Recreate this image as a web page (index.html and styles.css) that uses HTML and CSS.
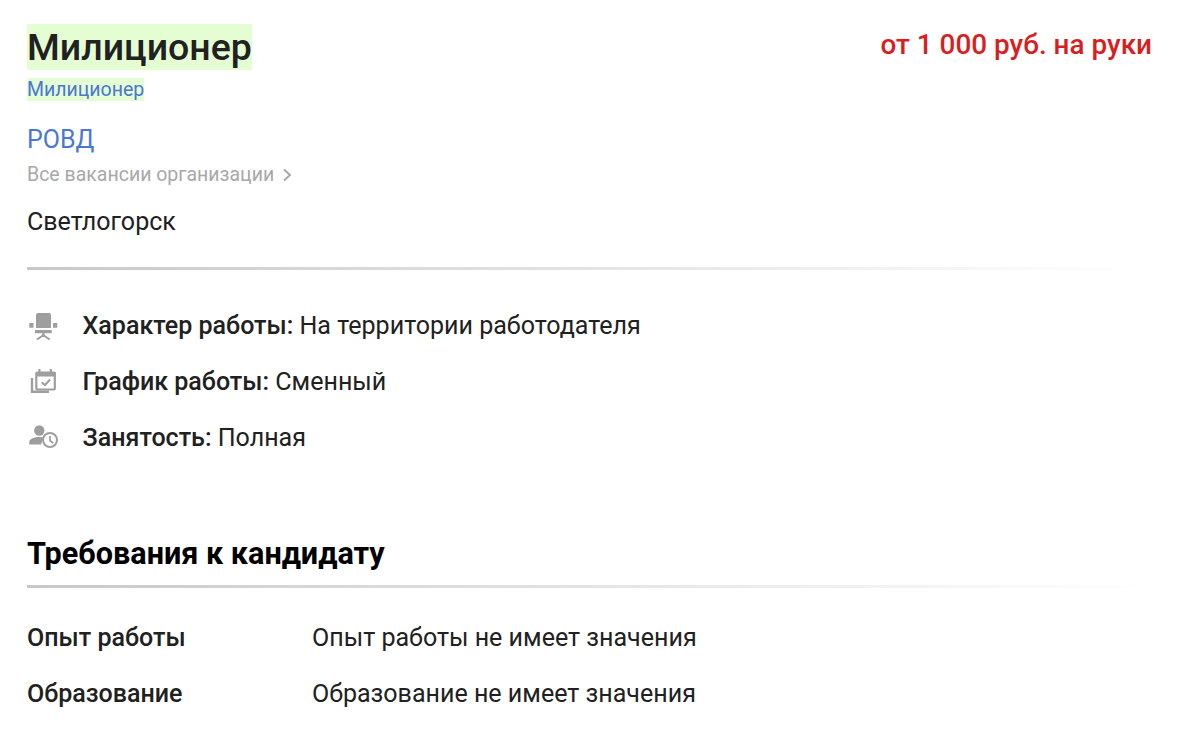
FILE: index.html
```html
<!DOCTYPE html>
<html lang="ru">
  <head>
    <meta charset="UTF-8" />
    <title>Милиционер</title>
    <link rel="stylesheet" href="styles.css">
  </head>
  <body>
    <main class="vacancy">
      <header class="vacancy-head">
        <div class="vacancy-titles">
          <h1 class="vacancy-title"><span class="match">Милиционер</span></h1>
          <a class="vacancy-category match" href="#">Милиционер</a>
        </div>
        <div class="vacancy-salary">от 1 000 руб. на руки</div>
      </header>

      <a class="company-name" href="#">РОВД</a>
      <a class="company-link" href="#">Все вакансии организации
        <svg class="chevron" width="12" height="16" viewBox="0 0 12 16" aria-hidden="true">
          <path d="M2 2.500 8 8l-6 5.500" fill="none" stroke="#a8a8a8" stroke-width="2"/>
        </svg>
      </a>
      <div class="vacancy-city">Светлогорск</div>

      <hr class="divider">

      <ul class="terms">
        <li class="term">
          <svg class="term-icon" width="32" height="30" viewBox="0 0 32 30" aria-hidden="true">
            <path fill="#9e9e9e" d="M9 4a2 2 0 0 1 2-2h11a2 2 0 0 1 2 2v13H9z"/>
            <path fill="#9e9e9e" d="M2.300 12h4.200v4.700H2.300zM26 12h4.300v4.700H26zM8 19h16.700v3.300H8z"/>
            <path fill="#9e9e9e" d="M15 22.300h2.700v1.700l5.600 3.800-1.200 1.500-4.800-3.200h-2l-4.800 3.200-1.200-1.500 5.700-3.800z"/>
          </svg>
          <span><b class="term-label">Характер работы:</b> На территории работодателя</span>
        </li>
        <li class="term">
          <svg class="term-icon" width="32" height="30" viewBox="0 0 32 30" aria-hidden="true">
            <path fill="none" stroke="#9e9e9e" stroke-width="2.400" d="M5 11v13.700h17"/>
            <path fill="none" stroke="#9e9e9e" stroke-width="2.200" d="M10.300 5.500h16.500a1 1 0 0 1 1 1v15a1 1 0 0 1-1 1H10.300a1 1 0 0 1-1-1v-15a1 1 0 0 1 1-1z"/>
            <path fill="#9e9e9e" d="M9 5h19.500v4.500H9zM11.300 2h2.200v4h-2.200zM22.700 2h2.200v4h-2.200z"/>
            <path fill="none" stroke="#9e9e9e" stroke-width="2" d="m14.700 15.200 3.300 2.800 5-5.500"/>
          </svg>
          <span><b class="term-label">График работы:</b> Сменный</span>
        </li>
        <li class="term">
          <svg class="term-icon" width="32" height="30" viewBox="0 0 32 30" aria-hidden="true">
            <circle cx="12.300" cy="7.500" r="5.200" fill="#9e9e9e"/>
            <path fill="#9e9e9e" d="M2.300 21.500v-2.500c0-3.300 5.500-5 10-5 2 0 4 .3 5.700 1a9 9 0 0 0-3.800 6.500z"/>
            <circle cx="23" cy="17" r="7" fill="#fff" stroke="#9e9e9e" stroke-width="2"/>
            <path fill="none" stroke="#9e9e9e" stroke-width="1.700" d="M23 13v4.700l3.300 2.300"/>
          </svg>
          <span><b class="term-label">Занятость:</b> Полная</span>
        </li>
      </ul>

      <section class="requirements">
        <h2 class="section-title">Требования к кандидату</h2>
        <hr class="divider divider-tight">
        <dl class="req-list">
          <div class="req-row">
            <dt class="req-label">Опыт работы</dt>
            <dd class="req-value">Опыт работы не имеет значения</dd>
          </div>
          <div class="req-row">
            <dt class="req-label">Образование</dt>
            <dd class="req-value">Образование не имеет значения</dd>
          </div>
        </dl>
      </section>
    </main>
  </body>
</html>
```
FILE: styles.css
```css
body {
  font-family: "Roboto", sans-serif;
  margin: 0;
  padding: 0;
  background-color: #fff;
  color: #212121;
  font-size: 25.06px;
}

a {
  text-decoration: none;
}

.vacancy {
  padding: 24px 48px 0 27px;
}

/* Head */
.vacancy-head {
  display: flex;
  justify-content: space-between;
  align-items: flex-start;
}

.vacancy-title {
  margin: 0;
  font-size: 37.5px;
  font-weight: 500;
  line-height: 46px;
}

.match {
  background-color: #e4fdd2;
}

.vacancy-title .match {
  display: inline-block;
}

.vacancy-category {
  display: inline-block;
  margin-top: 8px;
  font-size: 19.5px;
  line-height: 23px;
  color: #4a76d4;
}

.vacancy-salary {
  font-size: 27.9px;
  font-weight: 500;
  line-height: 32px;
  margin-top: 5px;
  color: #d81f1f;
}

/* Company */
.company-name {
  display: block;
  margin-top: 22px;
  font-size: 25px;
  line-height: 32px;
  color: #4a76d4;
}

.company-link {
  display: flex;
  align-items: center;
  gap: 8px;
  margin-top: 7px;
  font-size: 19.5px;
  line-height: 24px;
  color: #a8a8a8;
}

.vacancy-city {
  margin-top: 19px;
  line-height: 32px;
}

.divider {
  height: 3px;
  margin: 29px 0 0;
  border: 0;
  width: 1120px;
  background: linear-gradient(to right, #c8c8c8, #fff);
}

/* Terms */
.terms {
  list-style: none;
  margin: 28px 0 0;
  padding: 0;
}

.term {
  display: flex;
  align-items: center;
  gap: 24px;
  height: 56px;
  line-height: 32px;
}

.term-icon {
  flex: none;
  margin-right: -0.5px;
}

.term-label {
  font-weight: 500;
}

/* Requirements */
.requirements {
  margin-top: 68px;
}

.section-title {
  margin: 0;
  font-size: 30.6px;
  font-weight: 700;
  line-height: 40px;
  color: #000;
}

.divider-tight {
  margin-top: 11px;
}

.req-list {
  margin: 34px 0 0;
}

.req-row {
  display: flex;
  height: 56px;
  line-height: 32px;
}

.req-label {
  width: 285px;
  font-weight: 500;
}

.req-value {
  margin: 0;
}
```
